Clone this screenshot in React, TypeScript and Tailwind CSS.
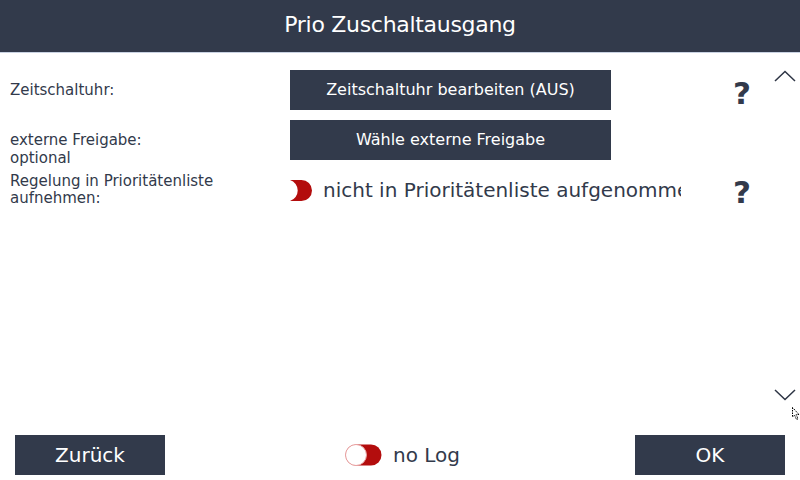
function Toggle() {
  return (
    <svg width="37" height="22" viewBox="0 0 37 22" className="shrink-0">
      <rect x="0.5" y="0.5" width="36" height="21" rx="10.5" fill="#b30d0d" />
      <circle cx="11" cy="11" r="10.5" fill="#ffffff" stroke="#e8a0a0" strokeWidth="1" />
    </svg>
  )
}

function HalfToggle() {
  return (
    <svg width="22" height="21" viewBox="0 0 22 21" className="shrink-0">
      <path d="M0 0 H11.5 A10.5 10.5 0 0 1 11.5 21 H0 A11 11 0 0 0 0 0 Z" fill="#b30d0d" />
    </svg>
  )
}

function Chevron({ up }: { up?: boolean }) {
  return (
    <svg width="22" height="12" viewBox="0 0 22 12" className="shrink-0">
      <path
        d={up ? 'M1 11 L11 1.5 L21 11' : 'M1 1 L11 10.5 L21 1'}
        fill="none"
        stroke="#2e3545"
        strokeWidth="1.5"
      />
    </svg>
  )
}

function Help() {
  return <div className="w-[14px] shrink-0 flex justify-center text-[31px] font-bold leading-none">?</div>
}

export default function App() {
  return (
    <div className="w-[800px] h-[480px] bg-white flex flex-col overflow-hidden text-[#323a4b] font-['DejaVu_Sans',sans-serif]">
      <div className="h-[53px] shrink-0 bg-[#323a4b] border-b border-[#c9d2e2] flex items-center justify-center">
        <span className="text-white text-[22px] tracking-[-0.3px] mb-[4px]">Prio Zuschaltausgang</span>
      </div>

      <div className="flex-1 flex">
        <div className="w-[770px] shrink-0 flex flex-col pt-[17px]">
          <div className="flex items-center h-10">
            <div className="w-[290px] shrink-0 pl-[10px] text-[15px]">Zeitschaltuhr:</div>
            <button className="w-[321px] shrink-0 h-10 bg-[#323a4b] text-white text-[16px]">Zeitschaltuhr bearbeiten (AUS)</button>
            <div className="ml-[124px] pt-[6px]">
              <Help />
            </div>
          </div>

          <div className="flex items-start h-10 mt-[10px]">
            <div className="w-[290px] shrink-0 pl-[10px] text-[15px] leading-[18px] pt-[11px]">
              externe Freigabe:
              <br />
              optional
            </div>
            <button className="w-[321px] shrink-0 h-10 bg-[#323a4b] text-white text-[16px]">Wähle externe Freigabe</button>
          </div>

          <div className="flex items-center h-[40px] mt-[10px]">
            <div className="w-[290px] shrink-0 pl-[10px] text-[15px] leading-[17px]">
              Regelung in Prioritätenliste
              <br />
              aufnehmen:
            </div>
            <div className="w-[391px] shrink-0 flex items-center overflow-hidden whitespace-nowrap">
              <HalfToggle />
              <span className="ml-[11px] text-[20px]">nicht in Prioritätenliste aufgenommen</span>
            </div>
            <div className="ml-[54px] pt-[4px]">
              <Help />
            </div>
          </div>
        </div>

        <div className="w-[30px] shrink-0 flex flex-col items-center pt-[17px]">
          <Chevron up />
          <div className="flex-1" />
          <Chevron />
          <svg width="8" height="14" viewBox="0 0 8 14" className="self-end mt-[6px] mb-[14px]">
            <path d="M0.5 0.5 L0.5 10 L2.5 8 L4.5 12.5 L6 11.8 L4.2 7.5 L7 7.5 Z" fill="#ffffff" stroke="#000000" strokeWidth="1" strokeDasharray="1.5 1" />
          </svg>
        </div>
      </div>

      <div className="h-[45px] shrink-0 flex items-start justify-between px-[15px] pb-[5px]">
        <button className="w-[150px] h-10 bg-[#323a4b] text-white text-[20px]">Zurück</button>
        <div className="flex items-center h-10 gap-[11px] ml-[5px]">
          <Toggle />
          <span className="text-[20px]">no Log</span>
        </div>
        <button className="w-[150px] h-10 bg-[#323a4b] text-white text-[20px]">OK</button>
      </div>
    </div>
  )
}
